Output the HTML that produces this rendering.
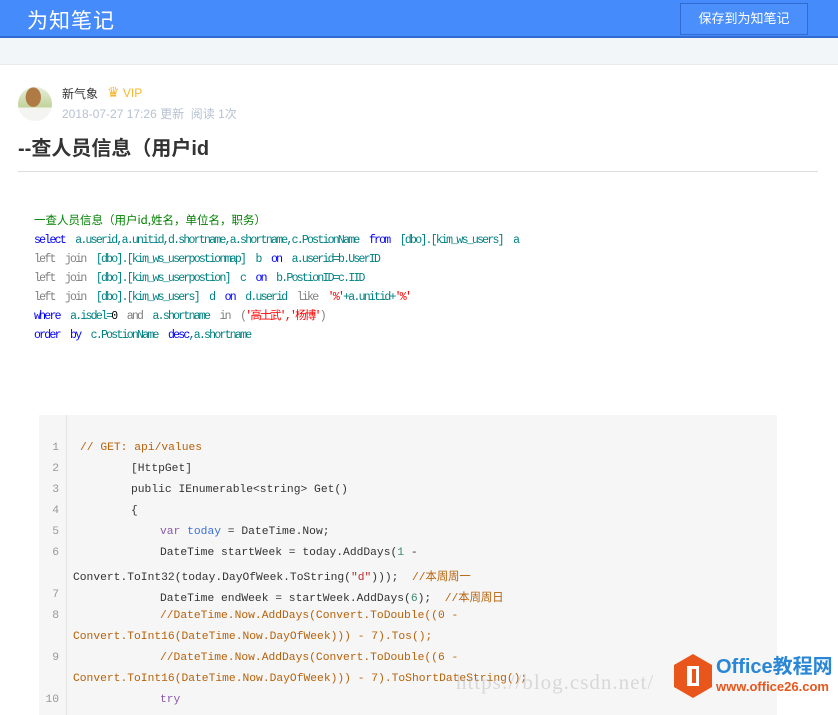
<!DOCTYPE html>
<html><head><meta charset="utf-8"><style>
*{margin:0;padding:0;box-sizing:border-box}
body{width:838px;height:703px;overflow:hidden;background:#fff;font-family:"Liberation Sans","Noto Sans CJK SC",sans-serif;position:relative}
.hd{position:absolute;left:0;top:0;width:838px;height:38px;background:#458bfb;border-bottom:2px solid #2f6bd0}
.logo{position:absolute;left:27px;top:5px;color:#fff;font-size:21px;letter-spacing:1px}
.btn{position:absolute;left:680px;top:3px;width:128px;height:32px;border:1px solid #2f6bd0;color:#fff;font-size:13px;line-height:30px;text-align:center;background:#4a8ffc}
.band{position:absolute;left:0;top:38px;width:838px;height:27px;background:#f3f6f9;border-bottom:1px solid #e8ebee}
.av{position:absolute;left:18px;top:87px;width:34px;height:34px;border-radius:50%;background:radial-gradient(ellipse at 45% 30%,#b07a45 0 28%,transparent 30%),linear-gradient(#e6eedc,#c2d39a 60%,#f4f4f0 60%)}
.nm{position:absolute;left:62px;top:85px;font-size:12px;color:#333}
.vip{position:absolute;left:107px;top:84px;font-size:12px;color:#f7b52c}
.meta{position:absolute;left:62px;top:105px;font-size:12px;color:#b7c1d1}
h1{position:absolute;left:18px;top:132px;font-size:20px;color:#333;font-weight:bold}
.hr{position:absolute;left:18px;top:171px;width:800px;height:1px;background:#ddd}
.sql{position:absolute;left:34px;top:211px;font-family:"Liberation Mono","Noto Sans CJK SC",monospace;font-size:11.5px;letter-spacing:-1.75px;line-height:19px;white-space:pre;color:#008080}
.sql .k{color:#0000ff}.sql .g{color:#808080}.sql .r{color:#ff0000}.sql .c{color:#008000;font-family:"Noto Sans CJK SC",sans-serif;letter-spacing:0;font-size:11.5px}.sql .b{color:#000}
.code{position:absolute;left:39px;top:415px;width:738px;height:300px;background:#f6f6f6}
.gut{position:absolute;left:39px;top:415px;width:28px;height:300px;border-right:1px solid #e3e3e3}
.ln{position:absolute;left:39px;width:20px;text-align:right;font-family:"Liberation Mono",monospace;font-size:11.3px;color:#999}
.cl{position:absolute;left:73px;font-family:"Liberation Mono","Noto Sans CJK SC",monospace;font-size:11.3px;color:#333;white-space:pre}
.o{color:#b7620a}.p{color:#8959a8}.bl{color:#3e70d9}.gr{color:#3a8a6a}.rd{color:#c1272d}
.wm{position:absolute;left:456px;top:670px;font-family:"Liberation Serif",serif;font-size:21px;color:rgba(180,180,180,.45);letter-spacing:1px}
.ofl{position:absolute;left:674px;top:654px;width:38px;height:44px;background:#e8561c;clip-path:polygon(50% 0,100% 25%,100% 75%,50% 100%,0 75%,0 25%)}
.ofl i{position:absolute;left:13px;top:12px;width:12px;height:20px;border:3px solid #fff;border-left-width:5px}
.oft{position:absolute;left:716px;top:656px;color:#2a86d6;font-size:20px;font-weight:bold;line-height:22px}
.ofu{position:absolute;left:716px;top:679px;color:#e8561c;font-size:13px;font-weight:bold}
</style></head><body>
<div class="hd"><div class="logo">为知笔记</div><div class="btn">保存到为知笔记</div></div>
<div class="band"></div>
<div class="av"></div>
<div class="nm">新气象</div>
<div class="vip"><span style="font-size:14px">♛</span> VIP</div>
<div class="meta">2018-07-27 17:26 更新 &nbsp;阅读 1次</div>
<h1>--查人员信息（用户id</h1>
<div class="hr"></div>
<div class="sql"><span class="c">一查人员信息（用户id,姓名，单位名，职务）</span>
<span class="k">select</span>  a.userid,a.unitid,d.shortname,a.shortname,c.PostionName  <span class="k">from</span>  [dbo].[kim_ws_users]  a
<span class="g">left  join</span>  [dbo].[kim_ws_userpostionmap]  b  <span class="k">on</span>  a.userid=b.UserID
<span class="g">left  join</span>  [dbo].[kim_ws_userpostion]  c  <span class="k">on</span>  b.PostionID=c.IID
<span class="g">left  join</span>  [dbo].[kim_ws_users]  d  <span class="k">on</span>  d.userid  <span class="g">like</span>  <span class="r">'%'</span>+a.unitid+<span class="r">'%'</span>
<span class="k">where</span>  a.isdel=<span class="b">0</span>  <span class="g">and</span>  a.shortname  <span class="g">in</span>  <span class="g">(</span><span class="r">'高士武','杨博'</span><span class="g">)</span>
<span class="k">order  by</span>  c.PostionName  <span class="k">desc</span>,a.shortname</div>
<div class="code"></div><div class="gut"></div>
<div class="ln" style="top:442px">1</div><div class="ln" style="top:463px">2</div><div class="ln" style="top:484px">3</div><div class="ln" style="top:505px">4</div><div class="ln" style="top:526px">5</div><div class="ln" style="top:547px">6</div><div class="ln" style="top:589px">7</div><div class="ln" style="top:610px">8</div><div class="ln" style="top:652px">9</div><div class="ln" style="top:694px">10</div>
<div class="cl" style="top:442px;left:80px"><span class="o">// GET: api/values</span></div>
<div class="cl" style="top:463px;left:131px">[HttpGet]</div>
<div class="cl" style="top:484px;left:131px">public IEnumerable&lt;string&gt; Get()</div>
<div class="cl" style="top:505px;left:131px">{</div>
<div class="cl" style="top:526px;left:160px"><span class="p">var</span> <span class="bl">today</span> = DateTime.Now;</div>
<div class="cl" style="top:547px;left:160px">DateTime startWeek = today.AddDays(<span class="gr">1</span> -</div>
<div class="cl" style="top:568px">Convert.ToInt32(today.DayOfWeek.ToString(<span class="rd">"d"</span>)));  <span class="o">//本周周一</span></div>
<div class="cl" style="top:589px;left:160px">DateTime endWeek = startWeek.AddDays(<span class="gr">6</span>);  <span class="o">//本周周日</span></div>
<div class="cl o" style="top:610px;left:160px">//DateTime.Now.AddDays(Convert.ToDouble((0 -</div>
<div class="cl o" style="top:631px">Convert.ToInt16(DateTime.Now.DayOfWeek))) - 7).Tos();</div>
<div class="cl o" style="top:652px;left:160px">//DateTime.Now.AddDays(Convert.ToDouble((6 -</div>
<div class="cl o" style="top:673px">Convert.ToInt16(DateTime.Now.DayOfWeek))) - 7).ToShortDateString();</div>
<div class="cl p" style="top:694px;left:160px">try</div>
<div class="wm">https://blog.csdn.net/</div>
<div class="ofl"><i></i></div>
<div class="oft">Office教程网</div>
<div class="ofu">www.office26.com</div>
</body></html>
